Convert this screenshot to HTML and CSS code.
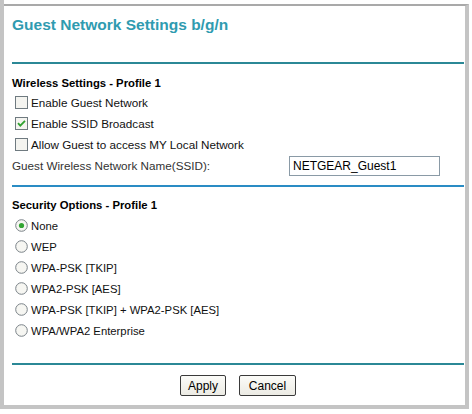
FILE: index.html
```html
<!DOCTYPE html>
<html>
<head>
<meta charset="utf-8">
<link rel="stylesheet" href="styles.css">
</head>
<body>
<div class="frame">
  <div class="panel">
    <h1 class="title">Guest Network Settings b/g/n</h1>
    <hr class="rule rule-teal rule-top">
    <div class="section">
      <div class="heading">Wireless Settings - Profile 1</div>
      <label class="row opt">
        <svg class="box" width="13" height="13" viewBox="0 0 13 13"><rect x="0.5" y="0.5" width="12" height="12" fill="#f4f4f0" stroke="#6f7a80"/></svg>
        <span>Enable Guest Network</span>
      </label>
      <label class="row opt">
        <svg class="box" width="13" height="13" viewBox="0 0 13 13"><rect x="0.5" y="0.5" width="12" height="12" fill="#f4f4f0" stroke="#6f7a80"/><path d="M3 6.2 L5.3 8.6 L10 3.8" fill="none" stroke="#2fa12f" stroke-width="1.8"/></svg>
        <span>Enable SSID Broadcast</span>
      </label>
      <label class="row opt">
        <svg class="box" width="13" height="13" viewBox="0 0 13 13"><rect x="0.5" y="0.5" width="12" height="12" fill="#f4f4f0" stroke="#6f7a80"/></svg>
        <span>Allow Guest to access MY Local Network</span>
      </label>
      <div class="row ssid">
        <span class="ssid-label">Guest Wireless Network Name(SSID):</span>
        <input class="ssid-input" type="text" value="NETGEAR_Guest1">
      </div>
    </div>
    <hr class="rule rule-blue rule-mid">
    <div class="section">
      <div class="heading heading-sec">Security Options - Profile 1</div>
      <div class="radios">
        <label class="row opt">
          <svg class="radio" width="13" height="13" viewBox="0 0 13 13"><circle cx="6.5" cy="6.5" r="5.8" fill="#f6f6f2" stroke="#7a8288"/><circle cx="6.5" cy="6.5" r="2.6" fill="#32a532"/></svg>
          <span>None</span>
        </label>
        <label class="row opt">
          <svg class="radio" width="13" height="13" viewBox="0 0 13 13"><circle cx="6.5" cy="6.5" r="5.8" fill="#f6f6f2" stroke="#7a8288"/></svg>
          <span>WEP</span>
        </label>
        <label class="row opt">
          <svg class="radio" width="13" height="13" viewBox="0 0 13 13"><circle cx="6.5" cy="6.5" r="5.8" fill="#f6f6f2" stroke="#7a8288"/></svg>
          <span>WPA-PSK [TKIP]</span>
        </label>
        <label class="row opt">
          <svg class="radio" width="13" height="13" viewBox="0 0 13 13"><circle cx="6.5" cy="6.5" r="5.8" fill="#f6f6f2" stroke="#7a8288"/></svg>
          <span>WPA2-PSK [AES]</span>
        </label>
        <label class="row opt">
          <svg class="radio" width="13" height="13" viewBox="0 0 13 13"><circle cx="6.5" cy="6.5" r="5.8" fill="#f6f6f2" stroke="#7a8288"/></svg>
          <span>WPA-PSK [TKIP] + WPA2-PSK [AES]</span>
        </label>
        <label class="row opt">
          <svg class="radio" width="13" height="13" viewBox="0 0 13 13"><circle cx="6.5" cy="6.5" r="5.8" fill="#f6f6f2" stroke="#7a8288"/></svg>
          <span>WPA/WPA2 Enterprise</span>
        </label>
      </div>
    </div>
    <hr class="rule rule-teal rule-bottom">
    <div class="buttons">
      <button class="btn btn-apply" type="button">Apply</button>
      <button class="btn btn-cancel" type="button">Cancel</button>
    </div>
  </div>
</div>
</body>
</html>
```
FILE: styles.css
```css
html, body {
  margin: 0;
  padding: 0;
  background: #ffffff;
}
body {
  font-family: "Liberation Sans", Arial, sans-serif;
  font-size: 11.7px;
  color: #111;
  width: 472px;
  height: 414px;
  overflow: hidden;
}
.frame {
  width: 469px;
  height: 409px;
  border-left: 4px solid #c4c4c4;
  padding-top: 4px;
  box-sizing: border-box;
}
.panel {
  box-sizing: border-box;
  width: 465px;
  height: 405px;
  border-top: 2px solid #a9a9a9;
  border-right: 4px solid #c4c4c4;
  border-bottom: 4px solid #c4c4c4;
  padding: 0 1px 0 8px;
  display: flex;
  flex-direction: column;
}
.title {
  margin: 9px 0 0 0;
  font-size: 15.5px;
  line-height: 20px;
  font-weight: bold;
  color: #2f9bb0;
  height: 20px;
}
.rule {
  margin: 0;
  border: 0;
  height: 2px;
  width: 100%;
}
.rule-teal { background: #2b8896; }
.rule-blue { background: #2a8cc4; }
.rule-top { margin-top: 27px; }
.rule-mid { margin-top: 9px; }
.rule-bottom { margin-top: 22px; }
.section {
  display: flex;
  flex-direction: column;
}
.heading {
  font-weight: bold;
  font-size: 11.3px;
  height: 18px;
  line-height: 18px;
  margin-top: 10px;
  color: #000;
}
.heading-sec {
  margin-top: 9px;
  height: 19px;
  line-height: 19px;
}
.row {
  height: 21px;
  display: flex;
  align-items: center;
}
.opt {
  padding-left: 3px;
  gap: 3px;
}
.radios .row span {
  font-size: 11.3px;
}
.box, .radio {
  flex: none;
}
.ssid {
  justify-content: space-between;
  padding-right: 24px;
}
.ssid-label {
  color: #333;
}
.ssid-input {
  box-sizing: border-box;
  width: 151px;
  height: 20px;
  border: 1px solid #8a9aa6;
  padding: 0 0 0 3px;
  font-family: "Liberation Sans", Arial, sans-serif;
  font-size: 12px;
  color: #000;
  background: #fff;
  outline: none;
}
.buttons {
  display: flex;
  justify-content: center;
  gap: 13px;
  margin-top: 10px;
}
.btn {
  box-sizing: border-box;
  height: 21px;
  padding: 0;
  border: 1px solid #3a3a3a;
  border-radius: 2px;
  background: linear-gradient(#fbfbf8, #ecebe4);
  font-family: "Liberation Sans", Arial, sans-serif;
  font-size: 12px;
  color: #000;
}
.btn-apply { width: 46px; }
.btn-cancel { width: 57px; }
```
